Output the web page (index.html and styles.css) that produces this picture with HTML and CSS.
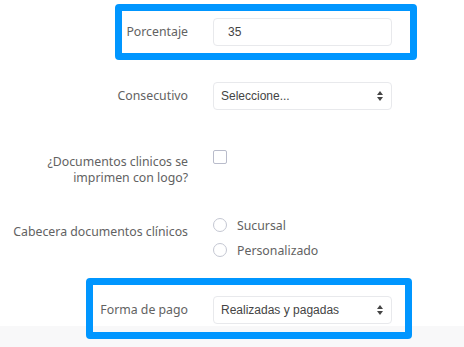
FILE: index.html
```html
<!DOCTYPE html>
<html lang="es">
<head>
<meta charset="utf-8">
<link rel="stylesheet" href="styles.css">
</head>
<body>
<div class="page">
  <div class="row row-1">
    <label class="label">Porcentaje</label>
    <div class="control"><div class="input">35</div></div>
    <div class="highlight hl-1"></div>
  </div>
  <div class="row row-2">
    <label class="label">Consecutivo</label>
    <div class="control">
      <div class="select"><span>Seleccione...</span>
        <svg class="caret" width="6" height="10" viewBox="0 0 6 10"><path d="M3 0 L6 4 H0 Z M0 6 H6 L3 10 Z" fill="#444"/></svg>
      </div>
    </div>
  </div>
  <div class="row row-3">
    <label class="label label-multi">¿Documentos clinicos se<br>imprimen con logo?</label>
    <div class="control"><span class="checkbox"></span></div>
  </div>
  <div class="row row-4">
    <label class="label label-radio">Cabecera documentos clínicos</label>
    <div class="control radios">
      <div class="option"><span class="radio"></span><span>Sucursal</span></div>
      <div class="option"><span class="radio"></span><span>Personalizado</span></div>
    </div>
  </div>
  <div class="row row-5">
    <label class="label">Forma de pago</label>
    <div class="control">
      <div class="select"><span>Realizadas y pagadas</span>
        <svg class="caret" width="6" height="10" viewBox="0 0 6 10"><path d="M3 0 L6 4 H0 Z M0 6 H6 L3 10 Z" fill="#444"/></svg>
      </div>
    </div>
    <div class="highlight hl-2"></div>
  </div>
</div>
</body>
</html>
```
FILE: styles.css
```css
html, body {
  margin: 0;
  padding: 0;
}
body {
  width: 464px;
  height: 347px;
  background: #f8f8f9;
  overflow: hidden;
  font-family: "Noto Sans", "Open Sans", sans-serif;
  color: #5a5a5a;
}
.page {
  background: #ffffff;
  height: 326px;
  padding-top: 18px;
  box-sizing: border-box;
}
.row {
  display: flex;
  align-items: flex-start;
  position: relative;
}
.label {
  width: 188px;
  flex: none;
  text-align: right;
  font-size: 12.3px;
  line-height: 16px;
  padding-top: 6px;
  color: #626262;
}
.control {
  margin-left: 25px;
  width: 179px;
}
.input, .select {
  height: 28px;
  box-sizing: border-box;
  border: 1px solid #e8e9ec;
  border-radius: 4px;
  font-family: "Liberation Sans", Arial, sans-serif;
  font-size: 12px;
  color: #444;
  display: flex;
  align-items: center;
}
.input {
  padding-left: 14px;
}
.select {
  padding: 0 8px 0 7px;
  justify-content: space-between;
}
.caret {
  display: block;
}
.row-2 { margin-top: 36px; }
.row-3 { margin-top: 36px; }
.label-multi { padding-top: 8px; }
.checkbox {
  display: block;
  margin-top: 4px;
  width: 14px;
  height: 14px;
  box-sizing: border-box;
  border: 1px solid #b9bccb;
  border-radius: 2px;
}
.row-4 { margin-top: 28px; }
.label-radio { padding-top: 10px; }
.radios {
  display: flex;
  flex-direction: column;
  gap: 3px;
}
.option {
  display: flex;
  align-items: center;
  height: 22px;
  gap: 10px;
  font-size: 12.3px;
  color: #626262;
}
.radio {
  width: 14px;
  height: 14px;
  box-sizing: border-box;
  border: 1px solid #c4c7d2;
  border-radius: 50%;
  flex: none;
}
.row-5 { margin-top: 35px; }
.highlight {
  position: absolute;
  border: 7px solid #0096ff;
  border-radius: 4px;
  box-sizing: border-box;
  pointer-events: none;
}
.hl-1 {
  left: 115px;
  top: -14px;
  width: 302px;
  height: 56px;
}
.hl-2 {
  left: 86px;
  top: -18px;
  width: 326px;
  height: 61px;
}
```
